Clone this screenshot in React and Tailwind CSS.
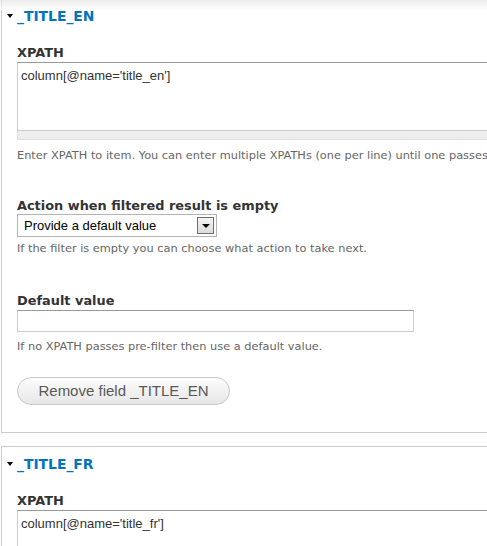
import React from "react";

const label = "block font-['DejaVu_Sans',sans-serif] text-[12.9px] leading-[16px] font-bold text-[#333]";
const desc = "font-['DejaVu_Sans',sans-serif] text-[11.35px] leading-[16px] text-[#666] whitespace-nowrap";

const Legend = ({ title }) => (
  <div className="h-[34px] flex items-center pl-[5px]">
    <span className="w-0 h-0 border-l-[3.5px] border-r-[3.5px] border-t-[4px] border-l-transparent border-r-transparent border-t-black mr-[4px]" />
    <span className="font-['DejaVu_Sans',sans-serif] text-[13.9px] font-bold text-[#0074bd] leading-[16px]">
      {title}
    </span>
  </div>
);

const XpathArea = ({ value }) => (
  <div className="w-[600px]">
    <div className="h-[69px] border border-[#ccc] border-t-[#999] bg-white pl-[3px] pt-[5px] font-['Liberation_Sans',Arial,sans-serif] text-[13px] leading-[16px] text-[#333]">
      {value}
    </div>
    <div className="h-[9px] bg-[#eee] border border-t-0 border-[#ddd]" />
  </div>
);

const FieldBlock = ({ title, xpath, full = true, className = "" }) => (
  <div className={`ml-px w-[640px] border border-[#ccc] bg-white ${className}`}>
    <Legend title={title} />
    <div className="pl-[15px]">
      <label className={`${label} mt-[12px]`}>XPATH</label>
      <div className="mt-px">
        <XpathArea value={xpath} />
      </div>
      {full && (
        <>
          <p className={`${desc} mt-[7px]`}>
            Enter XPATH to item. You can enter multiple XPATHs (one per line) until one passes pre-filter.
          </p>

          <label className={`${label} mt-[35px]`}>Action when filtered result is empty</label>
          <div className="w-[200px] h-[23px] border border-[#b4b4b4] bg-white flex items-center justify-between pl-[6px] pr-[2px]">
            <span className="font-['Liberation_Sans',Arial,sans-serif] text-[13px] text-black leading-[16px]">
              Provide a default value
            </span>
            <span className="w-[17px] h-[17px] border border-[#6e6e6e] bg-[linear-gradient(#f4f4f4,#dcdcdc)] flex items-center justify-center">
              <span className="w-0 h-0 border-l-[4px] border-r-[4px] border-t-[4px] border-l-transparent border-r-transparent border-t-black" />
            </span>
          </div>
          <p className={`${desc} mt-[3px]`}>If the filter is empty you can choose what action to take next.</p>

          <label className={`${label} mt-[37px]`}>Default value</label>
          <div className="mt-px w-[397px] h-[22px] border border-[#ccc] border-t-[#999] bg-white" />
          <p className={`${desc} mt-[6px]`}>If no XPATH passes pre-filter then use a default value.</p>

          <button className="mt-[23px] mb-[27px] w-[213px] h-[28px] rounded-full border border-[#c8c8c8] bg-[linear-gradient(#fdfdfd,#e6e6e6)] font-['Liberation_Sans',Arial,sans-serif] text-[15px] text-[#595959]">
            Remove field _TITLE_EN
          </button>
        </>
      )}
    </div>
  </div>
);

export default function App() {
  return (
    <div className="w-[487px] h-[546px] overflow-hidden bg-white relative">
      <div className="absolute inset-x-0 top-0 h-[10px] bg-[linear-gradient(#e4e4e4,#fff)] z-10 pointer-events-none opacity-70" />
      <div className="-mt-[2px]">
        <FieldBlock title="_TITLE_EN" xpath="column[@name='title_en']" />
        <FieldBlock title="_TITLE_FR" xpath="column[@name='title_fr']" full={false} className="mt-[13px] pb-[60px]" />
      </div>
    </div>
  );
}
